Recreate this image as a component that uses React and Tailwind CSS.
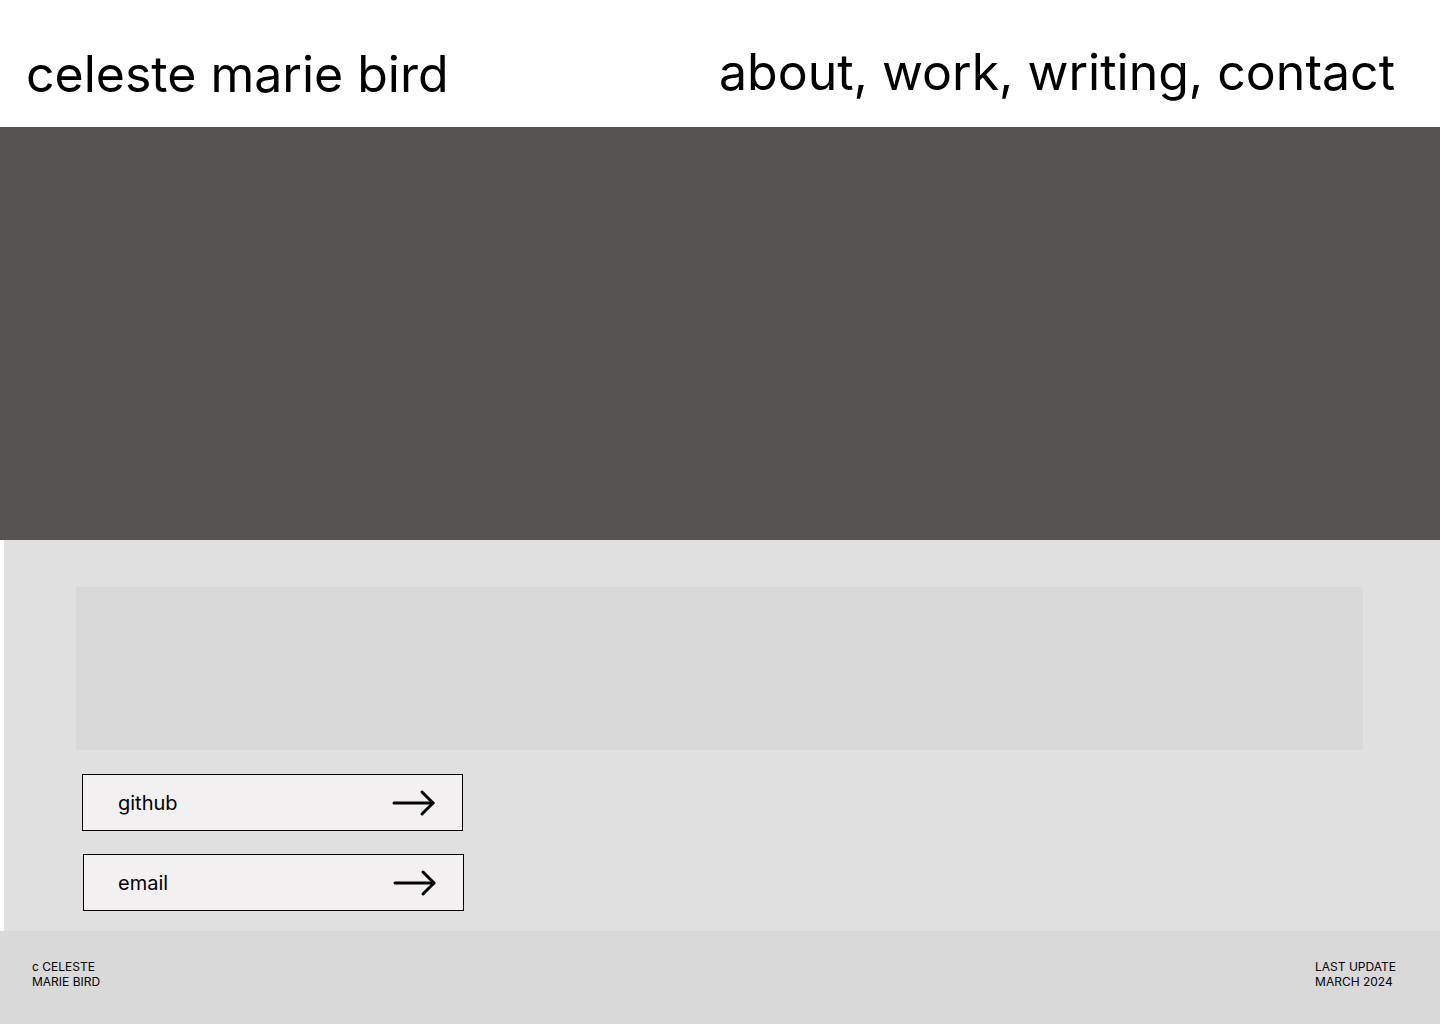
import React from "react";

function Arrow() {
  return (
    <svg width="44" height="28" viewBox="0 0 44 28" fill="none" stroke="black" strokeWidth="3" strokeLinecap="round" strokeLinejoin="round">
      <path d="M2 14 H41" />
      <path d="M30 3 L41 14 L30 25" />
    </svg>
  );
}

function LinkBox({ label, className }) {
  return (
    <div className={"flex items-center justify-between h-[57px] w-[381px] border border-black bg-[#f2f0f1] pr-[26px] " + className}>
      <span className="text-[20px] text-black">{label}</span>
      <Arrow />
    </div>
  );
}

export default function App() {
  return (
    <div className="w-[1440px] h-[1024px] bg-white flex flex-col" style={{ fontFamily: "Inter, 'Noto Sans', sans-serif" }}>
      <header className="h-[127px] flex items-start justify-between pl-[26px] pr-[45px]">
        <h1 className="mt-[49px] text-[50px] leading-none text-black font-normal">celeste marie bird</h1>
        <nav className="mt-[47px] text-[50px] leading-none text-black">about, work, writing, contact</nav>
      </header>
      <div className="h-[413px] bg-[#555452]" />
      <section className="h-[391px] ml-[4px] bg-[#e0e0e0] pt-[47px] pl-[72px] pr-[77px]">
        <div className="h-[163px] bg-[#d9d9d9]" />
        <div className="flex flex-col gap-[23px] mt-[24px]">
          <LinkBox label="github" className="ml-[6px] pl-[35px]" />
          <LinkBox label="email" className="ml-[7px] pl-[34px]" />
        </div>
      </section>
      <footer className="flex-1 bg-[#d9d9d9] flex justify-between pl-[32px] pr-[44px] pt-[28px] text-[12px] leading-[15px] text-black">
        <div>c CELESTE<br />MARIE BIRD</div>
        <div>LAST UPDATE<br />MARCH 2024</div>
      </footer>
    </div>
  );
}
